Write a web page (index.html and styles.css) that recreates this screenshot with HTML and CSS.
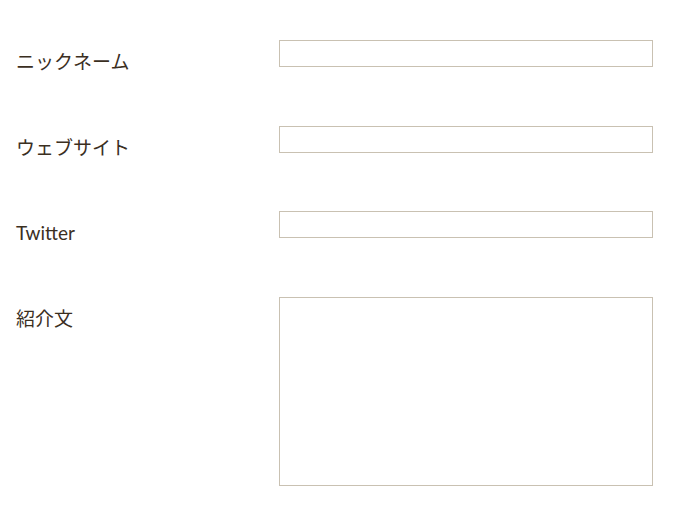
FILE: index.html
```html
<!DOCTYPE html>
<html lang="ja">
<head>
<meta charset="utf-8">
<link rel="stylesheet" href="styles.css">
</head>
<body>
<form class="form">
  <div class="row">
    <label class="label">ニックネーム</label>
    <input class="field" type="text">
  </div>
  <div class="row">
    <label class="label">ウェブサイト</label>
    <input class="field" type="text">
  </div>
  <div class="row">
    <label class="label">Twitter</label>
    <input class="field" type="text">
  </div>
  <div class="row">
    <label class="label">紹介文</label>
    <textarea class="field area"></textarea>
  </div>
</form>
</body>
</html>
```
FILE: styles.css
```css
html, body {
  margin: 0;
  padding: 0;
  background: #ffffff;
}
.form {
  padding: 40px 29px 0 16px;
  display: flex;
  flex-direction: column;
  gap: 51.6px;
}
.row {
  display: grid;
  grid-template-columns: 263px 1fr;
  align-items: start;
}
.label {
  font-family: Lato, "Noto Sans CJK JP", sans-serif;
  font-size: 19px;
  color: #3b2f1f;
  padding-top: 10px;
  line-height: 24px;
}
.field {
  box-sizing: border-box;
  width: 374px;
  height: 27px;
  margin: 0;
  border: 1px solid #c9c1b2;
  border-radius: 0;
  background: #fff;
  padding: 0 6px;
  outline: none;
}
.area {
  height: 189px;
  resize: none;
  display: block;
}
```
